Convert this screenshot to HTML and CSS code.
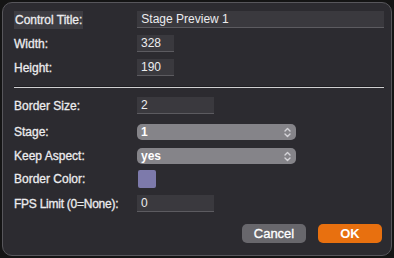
FILE: index.html
```html
<!DOCTYPE html>
<html lang="en">

<head>
  <meta charset="UTF-8">
  <meta name="viewport" content="width=device-width, initial-scale=1.0">
  <title>Control Settings</title>
  <link rel="stylesheet" href="styles.css">
</head>

<body>
  <div class="panel">
    <div class="row">
      <label class="label selected">Control Title:</label>
      <input class="field wide" type="text" value="Stage Preview 1">
    </div>
    <div class="row">
      <label class="label">Width:</label>
      <input class="field short" type="text" value="328">
    </div>
    <div class="row">
      <label class="label">Height:</label>
      <input class="field short" type="text" value="190">
    </div>

    <hr class="sep">

    <div class="row">
      <label class="label">Border Size:</label>
      <input class="field mid" type="text" value="2">
    </div>
    <div class="row gap-select">
      <label class="label">Stage:</label>
      <div class="select"><span>1</span>
        <svg class="chev" width="9" height="11" viewBox="0 0 9 11"><path d="M2 4 L4.5 1.5 L7 4 M2 7 L4.5 9.5 L7 7" fill="none" stroke="#d4d3d8" stroke-width="1.4" stroke-linecap="round" stroke-linejoin="round"/></svg>
      </div>
    </div>
    <div class="row gap-select2">
      <label class="label">Keep Aspect:</label>
      <div class="select"><span>yes</span>
        <svg class="chev" width="9" height="11" viewBox="0 0 9 11"><path d="M2 4 L4.5 1.5 L7 4 M2 7 L4.5 9.5 L7 7" fill="none" stroke="#d4d3d8" stroke-width="1.4" stroke-linecap="round" stroke-linejoin="round"/></svg>
      </div>
    </div>
    <div class="row gap-swatch">
      <label class="label">Border Color:</label>
      <div class="swatch"></div>
    </div>
    <div class="row">
      <label class="label narrow">FPS Limit (0=None):</label>
      <input class="field mid" type="text" value="0">
    </div>

    <div class="buttons">
      <button class="btn cancel">Cancel</button>
      <button class="btn ok">OK</button>
    </div>
  </div>
</body>

</html>
```

FILE: styles.css
```css
html,
body {
  margin: 0;
  background: #141414;
}

body {
  width: 394px;
  height: 258px;
  font-family: "Liberation Sans", Arial, sans-serif;
  font-size: 12px;
  color: #ececee;
}

.panel {
  box-sizing: border-box;
  margin: 2px;
  width: 390px;
  height: 254px;
  background: #2c2b30;
  border: 1px solid #57565b;
  border-radius: 10px;
  padding: 8px 0 0 11px;
}

.row {
  display: flex;
  align-items: center;
  height: 17px;
  margin-bottom: 7px;
}

.label {
  width: 123px;
  flex: none;
  -webkit-text-stroke: 0.3px #ececee;
}

.label.narrow {
  letter-spacing: -0.25px;
}

.label.selected {
  width: auto;
  margin-right: 54px;
  padding: 2px 1px 2px 1px;
  margin-left: 0;
  background: #3e3d42;
}

.field {
  box-sizing: border-box;
  height: 17px;
  background: #3a393e;
  border: none;
  border-bottom: 1px solid #5c5b60;
  color: #ececee;
  font-family: "Liberation Sans", Arial, sans-serif;
  font-size: 12px;
  padding: 0 4px;
  outline: none;
}

.wide {
  width: 247px;
}

.short {
  width: 37px;
}

.mid {
  width: 77px;
}

.sep {
  margin: 10px 0 9px 0;
  width: 370px;
  height: 1px;
  border: none;
  border-top: 1px solid #1e1d21;
  background: #cfcfd1;
}

.gap-select {
  margin-top: 10px;
  height: 16px;
}

.gap-select2 {
  margin-top: 8px;
  height: 16px;
  margin-bottom: 6px;
}

.select {
  box-sizing: border-box;
  width: 159px;
  height: 16px;
  border-radius: 5px;
  background: #858489;
  display: flex;
  align-items: center;
  justify-content: space-between;
  padding: 0 4px 0 4px;
  color: #fff;
  font-weight: bold;
}

.swatch {
  width: 18px;
  height: 18px;
  margin-left: 1px;
  border-radius: 2px;
  background: #7d7aab;
}

.gap-swatch {
  height: 18px;
}

.buttons {
  display: flex;
  justify-content: flex-end;
  gap: 12px;
  margin-top: 12px;
  padding-right: 9px;
}

.btn {
  width: 64px;
  height: 19px;
  border: none;
  border-radius: 5px;
  font-family: "Liberation Sans", Arial, sans-serif;
  font-size: 13px;
  color: #fff;
  padding: 0;
  -webkit-text-stroke: 0.3px #fff;
}

.cancel {
  background: #68676c;
}

.ok {
  background: #e8700f;
  font-weight: bold;
  -webkit-text-stroke: 0;
}
```
